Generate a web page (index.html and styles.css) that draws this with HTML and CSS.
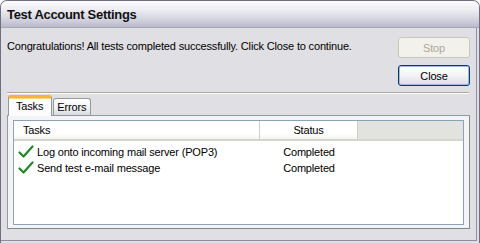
FILE: index.html
```html
<!DOCTYPE html>
<html lang="en">
<head>
    <meta charset="UTF-8">
    <title>Test Account Settings</title>
    <link rel="stylesheet" href="styles.css">
</head>
<body>
    <div class="window">
        <div class="titlebar">Test Account Settings</div>
        <div class="main">
            <div class="top-row">
                <p class="message">Congratulations! All tests completed successfully. Click Close to continue.</p>
                <div class="buttons">
                    <button class="btn" disabled>Stop</button>
                    <button class="btn default">Close</button>
                </div>
            </div>
            <div class="separator"></div>
            <div class="tabs">
                <div class="tab active">Tasks</div>
                <div class="tab">Errors</div>
            </div>
            <div class="panel">
                <div class="list">
                    <div class="list-head">
                        <div class="col-task">Tasks</div>
                        <div class="col-status">Status</div>
                        <div class="col-rest"></div>
                    </div>
                    <div class="row">
                        <div class="col-task">
                            <svg class="check" width="16" height="14" viewBox="0 0 16 14"><path d="M1.5 7.5 L5.5 11.5 L14.5 1.5" fill="none" stroke="#1f8a26" stroke-width="2.2" stroke-linecap="round" stroke-linejoin="round"/></svg>
                            Log onto incoming mail server (POP3)
                        </div>
                        <div class="col-status">Completed</div>
                    </div>
                    <div class="row">
                        <div class="col-task">
                            <svg class="check" width="16" height="14" viewBox="0 0 16 14"><path d="M1.5 7.5 L5.5 11.5 L14.5 1.5" fill="none" stroke="#1f8a26" stroke-width="2.2" stroke-linecap="round" stroke-linejoin="round"/></svg>
                            Send test e-mail message
                        </div>
                        <div class="col-status">Completed</div>
                    </div>
                </div>
            </div>
        </div>
    </div>
</body>
</html>
```

FILE: styles.css
```css
body {
    margin: 0;
    font-family: "Liberation Sans", Arial, sans-serif;
    font-size: 11px;
    letter-spacing: -0.17px;
    color: #000;
    background: #fff;
}
.window {
    width: 480px;
    height: 243px;
    box-sizing: border-box;
    display: flex;
    flex-direction: column;
    background: #e0dfe3;
    border: 1px solid #6f6f84;
    border-bottom: none;
    border-radius: 7px 7px 0 0;
    overflow: hidden;
}
.titlebar {
    height: 27px;
    flex: none;
    box-sizing: border-box;
    padding: 6px 0 0 6px;
    font-size: 13px;
    font-weight: bold;
    letter-spacing: -0.3px;
    color: #111;
    background: linear-gradient(#fdfdfe 0%, #ececf2 35%, #d4d4e0 70%, #b9b9cb 100%);
    border-bottom: 1px solid #a8a8ba;
}
.main {
    flex: 1;
    display: flex;
    flex-direction: column;
    padding: 9px 9px 0 6px;
    box-shadow: inset -2px -2px 0 #e0dfe3, inset -3px -3px 0 #8d8da2;
}
.top-row {
    display: flex;
    justify-content: space-between;
}
.message {
    margin: 3px 0 0 0;
    line-height: 13px;
}
.buttons {
    display: flex;
    flex-direction: column;
    gap: 7px;
    width: 72px;
}
.btn {
    height: 21px;
    font-family: inherit;
    font-size: 11px;
    letter-spacing: inherit;
    color: #000;
    border: 1px solid #003c74;
    border-radius: 3px;
    background: linear-gradient(#ffffff 0%, #f3f3f6 50%, #dcdce6 100%);
    padding: 0;
}
.btn.default {
    box-shadow: inset 0 0 0 1px #a8b8dc;
}
.btn:disabled {
    color: #aca899;
    border-color: #c9c7ba;
    background: #f2f1ec;
}
.separator {
    margin-top: 6px;
    margin-right: 1px;
    height: 1px;
    background: #aca899;
    border-bottom: 1px solid #fff;
}
.tabs {
    display: flex;
    align-items: flex-end;
    height: 20px;
    margin-top: 1px;
    padding-left: 1px;
    position: relative;
    z-index: 1;
}
.tab {
    height: 17px;
    box-sizing: border-box;
    padding: 2px 4px 0 3px;
    border: 1px solid #919b9c;
    border-bottom: none;
    border-radius: 3px 3px 0 0;
    background: linear-gradient(#ffffff, #f0f0f4 60%, #d8d8e2);
    margin-left: 1px;
}
.tab.active {
    height: 21px;
    margin-bottom: -1px;
    margin-left: 0;
    padding: 2px 8px 0 7px;
    background: #fcfcfe;
    border-top: 3px solid #f5b43c;
    box-shadow: inset 0 1px 0 #ffd77a;
}
.panel {
    height: 114px;
    box-sizing: border-box;
    border: 1px solid #919b9c;
    border-right-color: #7f8788;
    border-bottom-color: #7f8788;
    padding: 4px 5px 3px 5px;
    background: #f4f4f6;
}
.list {
    height: 100%;
    box-sizing: border-box;
    border: 1px solid #8aa2bc;
    background: #fff;
}
.list-head {
    display: flex;
    height: 20px;
    box-sizing: border-box;
    border-bottom: 2px solid #d5d5d0;
    line-height: 18px;
    margin-bottom: 3px;
}
.list-head .col-task {
    padding-left: 9px;
    border-right: 1px solid #d0d0c8;
    background: linear-gradient(#ffffff 70%, #f4f4f0);
}
.list-head .col-status {
    border-right: 1px solid #d0d0c8;
    background: linear-gradient(#ffffff 70%, #f4f4f0);
}
.col-task {
    width: 246px;
    box-sizing: border-box;
    display: flex;
    align-items: center;
}
.col-status {
    width: 98px;
    box-sizing: border-box;
    text-align: center;
}
.col-rest {
    flex: 1;
    background: #e2e3df;
}
.row {
    display: flex;
    height: 16px;
    line-height: 16px;
}
.row .col-task {
    padding-left: 4px;
}
.check {
    margin-right: 3px;
    flex: none;
}
```
